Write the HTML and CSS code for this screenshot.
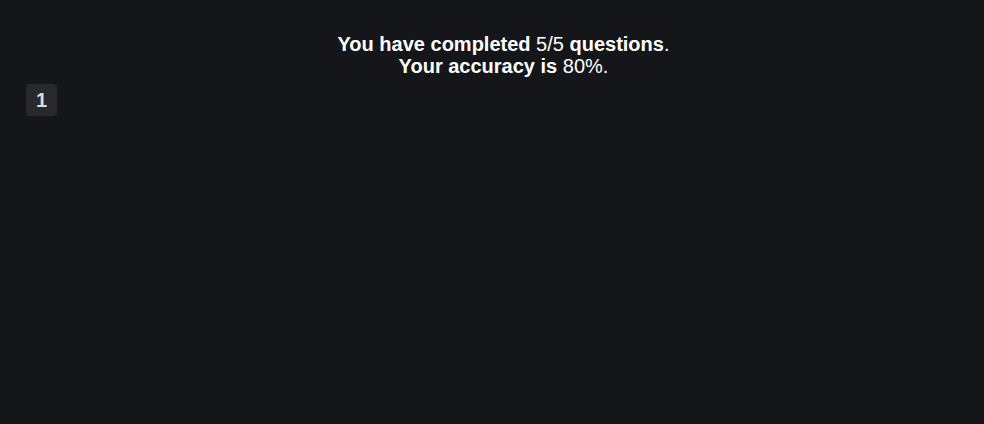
FILE: index.html
```html
<!DOCTYPE html>
<html>
<head>
<meta charset="utf-8">
<link rel="stylesheet" href="styles.css">
</head>
<body>
<main class="page">
  <div class="summary">
    <p class="line"><b>You have completed</b> 5/5 <b>questions</b>.</p>
    <p class="line"><b>Your accuracy is</b> 80%.</p>
  </div>
  <div class="pages">
    <button class="page-btn">1</button>
  </div>
</main>
</body>
</html>
```
FILE: styles.css
```css
html, body {
  margin: 0;
  padding: 0;
  background: #15161a;
  height: 100%;
}
body {
  font-family: "Liberation Sans", Arial, sans-serif;
  color: #ffffff;
}
.page {
  padding: 33px 0 0 23px;
}
.summary {
  text-align: center;
  font-size: 20px;
  line-height: 22px;
}
.line {
  margin: 0;
}
.line b {
  font-weight: 700;
}
.pages {
  margin-top: 7px;
  padding-left: 3px;
  display: flex;
}
.page-btn {
  width: 31px;
  height: 32px;
  border: none;
  border-radius: 4px;
  background: #28292c;
  color: #dcdcdc;
  font-family: "Liberation Sans", Arial, sans-serif;
  font-size: 20px;
  font-weight: 700;
  padding: 0;
  display: flex;
  align-items: center;
  justify-content: center;
}
```
